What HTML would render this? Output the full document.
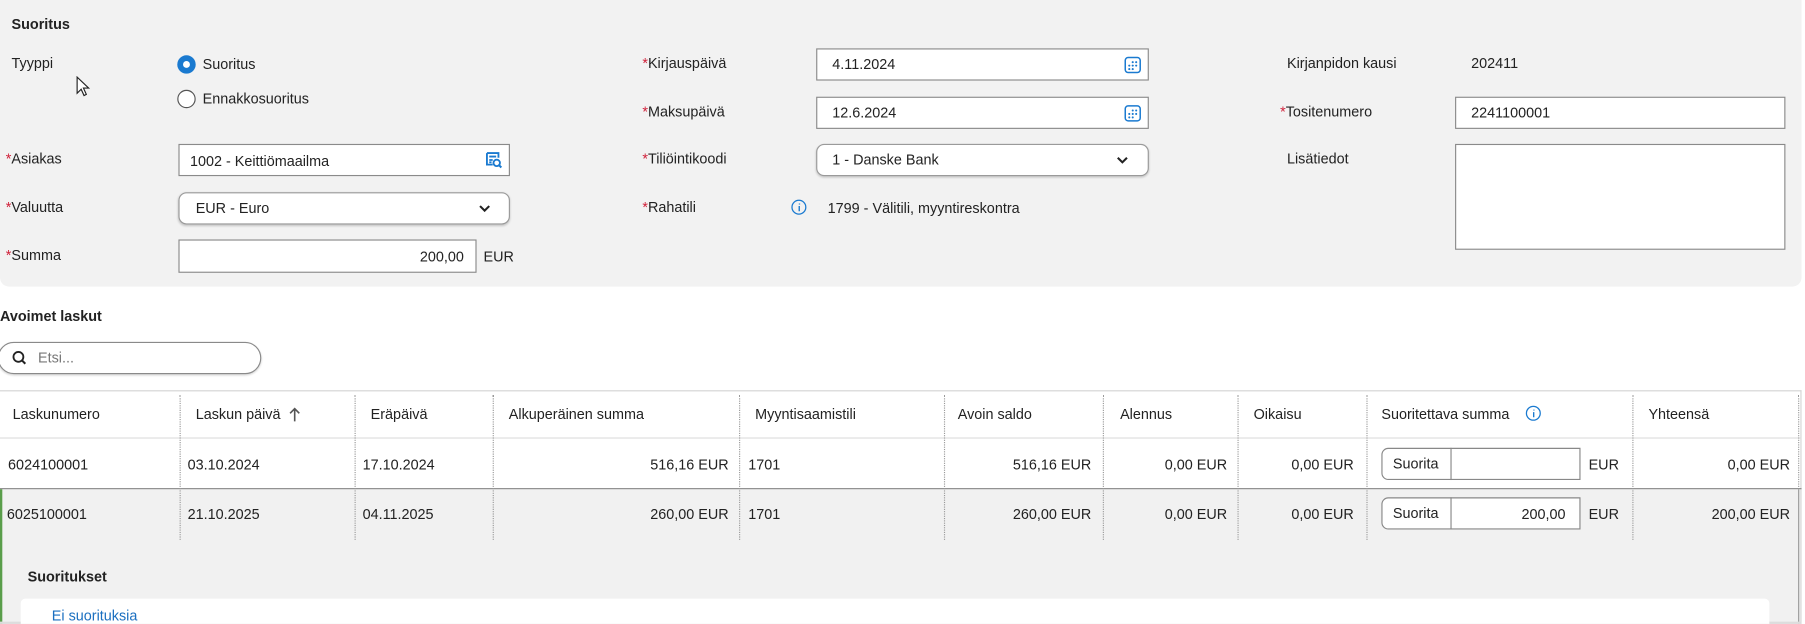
<!DOCTYPE html>
<html><head><meta charset="utf-8"><style>
html,body{margin:0;padding:0;background:#fff;overflow:hidden}
body{width:1805px;height:624px;position:relative}
#w{position:absolute;left:0;top:0;width:1568px;height:542px;transform:scale(1.15115);transform-origin:0 0;font-family:"Liberation Sans",sans-serif;font-size:12.5px;color:#222}
.a{position:absolute;white-space:nowrap}
.b{font-weight:bold}
.r{color:#d0213a}
.in{position:absolute;background:#fff;border:1px solid #8a8a8a;box-sizing:border-box}
.sel{position:absolute;background:#fff;border:1px solid #9a9a9a;border-radius:7px;box-sizing:border-box;box-shadow:0 1px 2px rgba(0,0,0,.2)}
.t{position:absolute;line-height:14px}
.d{position:absolute;border-left:1px dotted #999;width:0}
.rt{position:absolute;text-align:right;line-height:14px}
</style></head><body><div id="w">
<div class="a" style="left:0;top:0;width:1565px;height:249px;background:#f2f2f2;border-radius:0 0 8px 8px"></div>
<div class="t b" style="left:10px;top:14px">Suoritus</div>
<div class="t" style="left:10px;top:48px">Tyyppi</div>
<svg class="a" style="left:66px;top:66px" width="14" height="20" viewBox="0 0 14 20"><path d="M1 1 L1 15 L4.5 11.5 L7 17 L9 16 L6.5 10.5 L11 10.5 Z" fill="#fff" stroke="#222" stroke-width="1"/></svg>
<div class="a" style="left:154px;top:48px;width:16px;height:16px;border-radius:50%;background:#1a7ad0"></div>
<div class="a" style="left:159px;top:53px;width:6px;height:6px;border-radius:50%;background:#fff"></div>
<div class="t" style="left:176px;top:49px">Suoritus</div>
<div class="a" style="left:154px;top:78px;width:16px;height:16px;border-radius:50%;border:1px solid #555;box-sizing:border-box;background:#fff"></div>
<div class="t" style="left:176px;top:79px">Ennakkosuoritus</div>
<div class="t" style="left:5px;top:131px"><span class="r">*</span>Asiakas</div>
<div class="in" style="left:155px;top:125px;width:288px;height:28px"></div>
<div class="t" style="left:165px;top:133px">1002 - Keittiömaailma</div>
<svg class="a" style="left:421px;top:131px" width="16" height="16" viewBox="0 0 16 16"><path d="M2 2h10v4M2 2v10h5M4 5h6M4 8h3M4 10h2" fill="none" stroke="#1a7ad0" stroke-width="1.6"/><circle cx="10.5" cy="10.5" r="2.8" fill="none" stroke="#1a7ad0" stroke-width="1.6"/><path d="M12.5 12.5l2 2" stroke="#1a7ad0" stroke-width="1.8"/></svg>
<div class="t" style="left:5px;top:173px"><span class="r">*</span>Valuutta</div>
<div class="sel" style="left:155px;top:167px;width:288px;height:28px"></div>
<div class="t" style="left:170px;top:174px">EUR - Euro</div>
<svg class="a" style="left:415px;top:176px" width="12" height="10"><path d="M2 3l4 4 4-4" fill="none" stroke="#222" stroke-width="1.8"/></svg>
<div class="t" style="left:5px;top:215px"><span class="r">*</span>Summa</div>
<div class="in" style="left:155px;top:208px;width:259px;height:29px"></div>
<div class="rt" style="left:160px;top:216px;width:243px">200,00</div>
<div class="t" style="left:420px;top:216px">EUR</div>

<div class="t" style="left:558px;top:48px"><span class="r">*</span>Kirjauspäivä</div>
<div class="in" style="left:709px;top:42px;width:289px;height:28px"></div>
<div class="t" style="left:723px;top:49px">4.11.2024</div>
<div class="t" style="left:558px;top:90px"><span class="r">*</span>Maksupäivä</div>
<div class="in" style="left:709px;top:84px;width:289px;height:28px"></div>
<div class="t" style="left:723px;top:91px">12.6.2024</div>
<svg class="a" style="left:976px;top:48px" width="16" height="16" viewBox="0 0 16 16"><rect x="1.5" y="2" width="13" height="13" rx="2.5" fill="none" stroke="#1a7ad0" stroke-width="1.3"/><g fill="#1a7ad0"><circle cx="8" cy="6" r=".9"/><circle cx="11" cy="6" r=".9"/><circle cx="5" cy="9" r=".9"/><circle cx="8" cy="9" r=".9"/><circle cx="11" cy="9" r=".9"/><circle cx="5" cy="12" r=".9"/><circle cx="8" cy="12" r=".9"/></g></svg>
<svg class="a" style="left:976px;top:90px" width="16" height="16" viewBox="0 0 16 16"><rect x="1.5" y="2" width="13" height="13" rx="2.5" fill="none" stroke="#1a7ad0" stroke-width="1.3"/><g fill="#1a7ad0"><circle cx="8" cy="6" r=".9"/><circle cx="11" cy="6" r=".9"/><circle cx="5" cy="9" r=".9"/><circle cx="8" cy="9" r=".9"/><circle cx="11" cy="9" r=".9"/><circle cx="5" cy="12" r=".9"/><circle cx="8" cy="12" r=".9"/></g></svg>
<div class="t" style="left:558px;top:131px"><span class="r">*</span>Tiliöintikoodi</div>
<div class="sel" style="left:709px;top:125px;width:289px;height:28px"></div>
<div class="t" style="left:723px;top:132px">1 - Danske Bank</div>
<svg class="a" style="left:969px;top:134px" width="12" height="10"><path d="M2 3l4 4 4-4" fill="none" stroke="#222" stroke-width="1.8"/></svg>
<div class="t" style="left:558px;top:173px"><span class="r">*</span>Rahatili</div>
<svg class="a" style="left:687px;top:173px" width="14" height="14"><circle cx="7" cy="7" r="6" fill="none" stroke="#1a7ad0" stroke-width="1.1"/><path d="M7.3 6v4.5M7.5 3.8v.8" stroke="#1a7ad0" stroke-width="1.2"/></svg>
<div class="t" style="left:719px;top:174px">1799 - Välitili, myyntireskontra</div>

<div class="t" style="left:1118px;top:48px">Kirjanpidon kausi</div>
<div class="t" style="left:1278px;top:48px">202411</div>
<div class="t" style="left:1112px;top:90px"><span class="r">*</span>Tositenumero</div>
<div class="in" style="left:1264px;top:84px;width:287px;height:28px"></div>
<div class="t" style="left:1278px;top:91px">2241100001</div>
<div class="t" style="left:1118px;top:131px">Lisätiedot</div>
<div class="in" style="left:1264px;top:125px;width:287px;height:92px"></div>

<div class="t b" style="left:0;top:268px">Avoimet laskut</div>
<div class="a" style="left:-2px;top:297px;width:229px;height:28px;border:1px solid #8a8a8a;border-radius:14px;box-sizing:border-box;background:#fff;box-shadow:0 1px 2px rgba(0,0,0,.2)"></div>
<svg class="a" style="left:10px;top:304px" width="14" height="14"><circle cx="6" cy="6" r="4.3" fill="none" stroke="#222" stroke-width="1.6"/><path d="M9 9l3 3" stroke="#222" stroke-width="1.8"/></svg>
<div class="t" style="left:33px;top:304px;color:#777">Etsi...</div>

<div class="a" style="left:0;top:339px;width:1565px;height:1px;background:#d4d4d4"></div>
<div class="a" style="left:1564px;top:339px;width:1px;height:203px;background:#d4d4d4"></div>
<div class="a" style="left:0;top:380px;width:1565px;height:1px;background:#ddd"></div>
<div class="a" style="left:0;top:425px;width:1564px;height:117px;background:#f1f1f1"></div>
<div class="a" style="left:0;top:424px;width:1565px;height:1px;background:#888"></div>
<div class="a" style="left:0;top:425px;width:2px;height:117px;background:#5a9e4b"></div>
<div class="a" style="left:1562px;top:425px;width:1px;height:117px;background:#999"></div>
<div class="a" style="left:0;top:540px;width:1565px;height:2px;background:#ddd"></div>

<div class="d" style="left:156px;top:343px;height:126px"></div>
<div class="d" style="left:308px;top:343px;height:126px"></div>
<div class="d" style="left:428px;top:343px;height:126px"></div>
<div class="d" style="left:642px;top:343px;height:126px"></div>
<div class="d" style="left:820px;top:343px;height:126px"></div>
<div class="d" style="left:958px;top:343px;height:126px"></div>
<div class="d" style="left:1075px;top:343px;height:126px"></div>
<div class="d" style="left:1187px;top:343px;height:126px"></div>
<div class="d" style="left:1418px;top:343px;height:126px"></div>
<div class="d" style="left:1562px;top:343px;height:80px"></div>

<div class="t" style="left:11px;top:353px">Laskunumero</div>
<div class="t" style="left:170px;top:353px">Laskun päivä</div>
<svg class="a" style="left:250px;top:353px" width="12" height="14"><path d="M6 2v11M2 6l4-4 4 4" fill="none" stroke="#555" stroke-width="1.4"/></svg>
<div class="t" style="left:322px;top:353px">Eräpäivä</div>
<div class="t" style="left:442px;top:353px">Alkuperäinen summa</div>
<div class="t" style="left:656px;top:353px">Myyntisaamistili</div>
<div class="t" style="left:832px;top:353px">Avoin saldo</div>
<div class="t" style="left:973px;top:353px">Alennus</div>
<div class="t" style="left:1089px;top:353px">Oikaisu</div>
<div class="t" style="left:1200px;top:353px">Suoritettava summa</div>
<svg class="a" style="left:1325px;top:352px" width="14" height="14"><circle cx="7" cy="7" r="6" fill="none" stroke="#1a7ad0" stroke-width="1.1"/><path d="M7.3 6v4.5M7.5 3.8v.8" stroke="#1a7ad0" stroke-width="1.2"/></svg>
<div class="t" style="left:1432px;top:353px">Yhteensä</div>

<div class="t" style="left:7px;top:397px">6024100001</div>
<div class="t" style="left:163px;top:397px">03.10.2024</div>
<div class="t" style="left:315px;top:397px">17.10.2024</div>
<div class="rt" style="left:440px;top:397px;width:193px">516,16 EUR</div>
<div class="t" style="left:650px;top:397px">1701</div>
<div class="rt" style="left:830px;top:397px;width:118px">516,16 EUR</div>
<div class="rt" style="left:965px;top:397px;width:101px">0,00 EUR</div>
<div class="rt" style="left:1080px;top:397px;width:96px">0,00 EUR</div>
<div class="rt" style="left:1430px;top:397px;width:125px">0,00 EUR</div>
<div class="a" style="left:1200px;top:389px;width:173px;height:28px;border:1px solid #888;border-radius:6px 0 0 6px;box-sizing:border-box;background:#fff"></div>
<div class="a" style="left:1260px;top:389px;width:1px;height:28px;background:#888"></div>
<div class="t" style="left:1210px;top:396px">Suorita</div>
<div class="t" style="left:1380px;top:397px">EUR</div>

<div class="t" style="left:6px;top:440px">6025100001</div>
<div class="t" style="left:163px;top:440px">21.10.2025</div>
<div class="t" style="left:315px;top:440px">04.11.2025</div>
<div class="rt" style="left:440px;top:440px;width:193px">260,00 EUR</div>
<div class="t" style="left:650px;top:440px">1701</div>
<div class="rt" style="left:830px;top:440px;width:118px">260,00 EUR</div>
<div class="rt" style="left:965px;top:440px;width:101px">0,00 EUR</div>
<div class="rt" style="left:1080px;top:440px;width:96px">0,00 EUR</div>
<div class="rt" style="left:1430px;top:440px;width:125px">200,00 EUR</div>
<div class="a" style="left:1200px;top:432px;width:173px;height:28px;border:1px solid #888;border-radius:6px 0 0 6px;box-sizing:border-box;background:#fff"></div>
<div class="a" style="left:1260px;top:432px;width:1px;height:28px;background:#888"></div>
<div class="t" style="left:1210px;top:439px">Suorita</div>
<div class="rt" style="left:1270px;top:440px;width:90px">200,00</div>
<div class="t" style="left:1380px;top:440px">EUR</div>

<div class="t b" style="left:24px;top:494px">Suoritukset</div>
<div class="a" style="left:18px;top:520px;width:1519px;height:22px;background:#fff;border-radius:4px 4px 0 0"></div>
<div class="t" style="left:45px;top:528px;color:#1a6fc0">Ei suorituksia</div>
</div></body></html>
